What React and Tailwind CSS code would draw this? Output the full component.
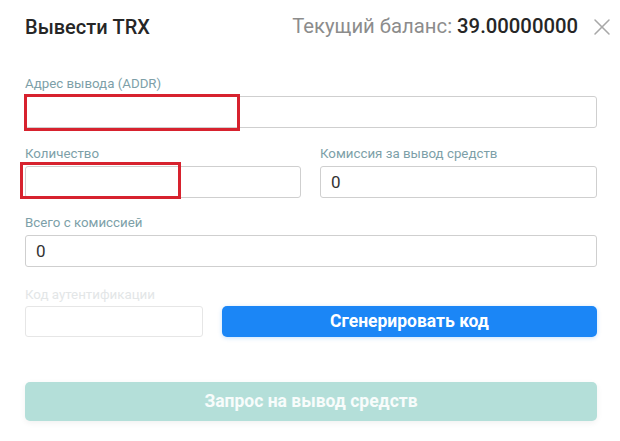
import { X } from 'lucide-react';

function Field({ label, value, className = '', children }) {
    return (
        <div className={className}>
            <div className="text-[13.3px] leading-[14px] text-[#7d9fa8]">{label}</div>
            <div className="relative mt-[5px]">
                <div className="h-[32px] rounded-[3px] border border-[#cfcfcf] bg-white pl-[10px] text-[17px] leading-[30px] text-[#333]">
                    {value}
                </div>
                {children}
            </div>
        </div>
    );
}

export default function App() {
    return (
        <div className="h-[441px] w-[620px] bg-white pl-[25px] pr-[23px] font-['Roboto',sans-serif]">
            <div className="flex h-[52px] items-center justify-between pt-[1px]">
                <h2 className="text-[20px] font-medium text-[#262626]">Вывести TRX</h2>
                <div className="flex items-center">
                    <span className="text-[20.3px] text-[#8c8c8c]">
                        Текущий баланс: <span className="font-medium text-[#262626]">39.00000000</span>
                    </span>
                    <X className="ml-[10px] mr-[-19px] h-[28px] w-[28px] text-[#a8a8a8]" strokeWidth={1.3} />
                </div>
            </div>

            <Field label="Адрес вывода (ADDR)" className="mt-[25px]">
                <div className="absolute left-[-1px] top-[-2px] h-[37px] w-[216px] border-[3px] border-[#d7222e]" />
            </Field>

            <div className="mt-[19px] flex gap-[19px]">
                <Field label="Количество" className="w-[276px]">
                    <div className="absolute left-[-5px] top-[-4px] h-[37px] w-[161px] border-[3px] border-[#d7222e]" />
                </Field>
                <Field label="Комиссия за вывод средств" value="0" className="flex-1" />
            </div>

            <Field label="Всего с комиссией" value="0" className="mt-[18px]" />

            <div className="mt-[21px]">
                <div className="text-[13.3px] leading-[14px] text-[#e3e6e7]">Код аутентификации</div>
                <div className="mt-[4px] flex gap-[19px]">
                    <div className="h-[31px] w-[178px] rounded-[3px] border border-[#e6e6e6]" />
                    <button className="h-[31px] flex-1 rounded-[5px] bg-[#1b86f6] text-[17.5px] font-bold text-white shadow-[0_1px_4px_rgba(27,134,246,0.25)]">
                        Сгенерировать код
                    </button>
                </div>
            </div>

            <button className="mt-[45px] h-[39px] w-full rounded-[5px] bg-[#b4dfd9] text-[17.5px] font-bold text-white/90 shadow-[0_2px_6px_rgba(0,0,0,0.06)]">
                Запрос на вывод средств
            </button>
        </div>
    );
}
